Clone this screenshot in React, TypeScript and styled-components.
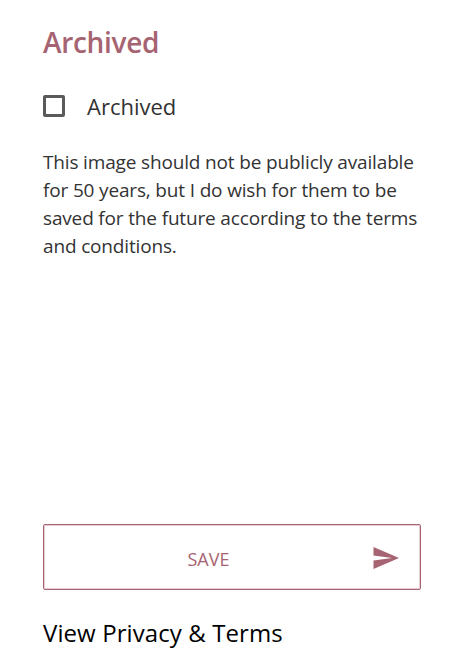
import React from 'react';
import styled, { createGlobalStyle } from 'styled-components';

const GlobalStyle = createGlobalStyle`
  * { box-sizing: border-box; }
  body { margin: 0; background: #fff; font-family: "Open Sans", sans-serif; }
`;

const Panel = styled.main`
  display: flex;
  flex-direction: column;
  align-items: flex-start;
  width: 467px;
  height: 663px;
  padding: 22px 43px 0;
  overflow: hidden;
`;

const Heading = styled.h2`
  margin: 0;
  color: #a66371;
  font: 600 28px/40px "Open Sans", sans-serif;
  letter-spacing: -0.3px;
  white-space: nowrap;
`;

const CheckLabel = styled.label`
  display: flex;
  align-items: center;
  gap: 22px;
  margin-top: 29px;
  color: #333;
  font-size: 22px;
  line-height: 30px;
`;

const Checkbox = styled.input`
  appearance: none;
  width: 22px;
  height: 22px;
  margin: 0;
  border: 3px solid #5a5a5a;
  border-radius: 2px;
`;

const Description = styled.p`
  width: 381px;
  margin: 27px 0 0;
  color: #333;
  font-size: 19px;
  line-height: 28px;
  letter-spacing: -0.16px;
  white-space: nowrap;
`;

const SaveButton = styled.button`
  display: grid;
  grid-template-columns: 1fr 26px;
  align-items: center;
  width: 378px;
  height: 66px;
  margin: 264px 0 0;
  padding: 2px 21px 0 0;
  border: 1px solid #a66371;
  border-radius: 2px;
  background: #fff;
  box-shadow: inset 0 0 0 1px #e5cdd3;
  color: #a66371;
  font: 400 18px/26px "Open Sans", sans-serif;
`;

const SaveText = styled.span`
  padding-top: 2px;
`;

const TermsLink = styled.a`
  margin-top: 26px;
  color: #000;
  font-size: 24px;
  line-height: 34px;
  letter-spacing: 0.09px;
  white-space: nowrap;
`;

export default function App() {
  return (
    <>
      <GlobalStyle />
      <Panel>
        <Heading>Archived</Heading>
        <CheckLabel><Checkbox type="checkbox" />Archived</CheckLabel>
        <Description>
          This image should not be publicly available<br />
          for 50 years, but I do wish for them to be<br />
          saved for the future according to the terms<br />
          and conditions.
        </Description>
        <SaveButton>
          <SaveText>SAVE</SaveText>
          <svg width="26" height="22" viewBox="0 0 26 22" fill="currentColor" aria-hidden="true">
            <path d="M0.5 0 26 11 0.5 22V13.5L19 11 0.5 8.5Z" />
          </svg>
        </SaveButton>
        <TermsLink>View Privacy &amp; Terms</TermsLink>
      </Panel>
    </>
  );
}
